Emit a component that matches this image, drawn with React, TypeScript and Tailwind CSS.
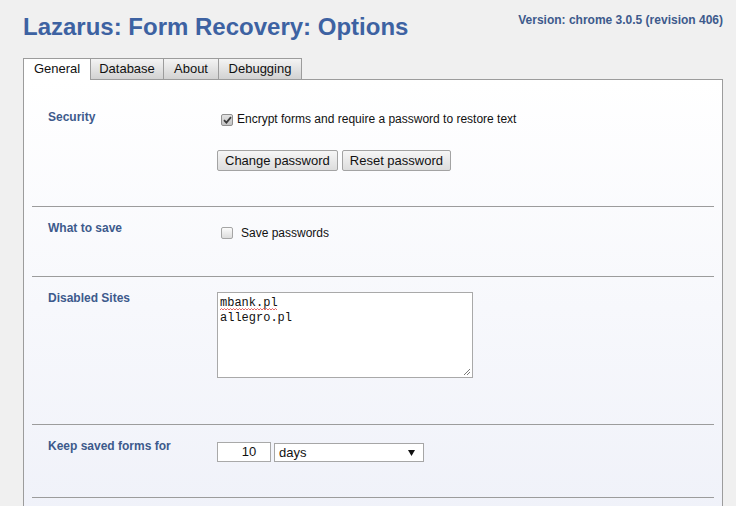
import type { ReactNode } from "react";

const tabs = [
  { name: "General", width: "w-[67px]", active: true },
  { name: "Database", width: "w-[73px]", active: false },
  { name: "About", width: "w-[55px]", active: false },
  { name: "Debugging", width: "w-[84px] border-r", active: false },
];

function Checkbox({ checked }: { checked?: boolean }) {
  return (
    <span
      className={
        checked
          ? "flex h-[12px] w-[12px] shrink-0 items-center justify-center rounded-[2px] border border-[#8f8f8f] bg-gradient-to-b from-[#e2e2e2] to-[#c4c4c4]"
          : "flex h-[12px] w-[12px] shrink-0 items-center justify-center rounded-[2px] border border-[#a5a5a5] bg-gradient-to-b from-[#fbfbfb] to-[#dcdcdc]"
      }
    >
      {checked && (
        <svg width="9" height="8" viewBox="0 0 9 8">
          <path d="M1 4.2 L3.4 6.6 L8 1.2" fill="none" stroke="#3a3a3a" strokeWidth="1.8" />
        </svg>
      )}
    </span>
  );
}

function Button({ children }: { children: ReactNode }) {
  return (
    <button className="h-[21px] rounded-[2px] border border-[#a3a3a3] bg-gradient-to-b from-[#f6f6f6] to-[#dddddd] px-[7px] text-[13px] leading-[19px] text-[#111]">
      {children}
    </button>
  );
}

function Section({ label, children }: { label: string; children: ReactNode }) {
  return (
    <div className="mx-2 flex border-b border-[#9c9c9c] pl-4 pt-[13px] pb-[35px]">
      <div className="w-[169px] shrink-0 text-[12px] font-bold leading-[16px] text-[#3d5a8c]">{label}</div>
      <div className="flex flex-col">{children}</div>
    </div>
  );
}

export default function App() {
  return (
    <div className="h-screen overflow-hidden bg-[#f0f0f0] pl-[23px] pr-[13px] font-['Liberation_Sans',Arial,sans-serif] text-[13px] text-[#111]">
      <div className="flex items-start justify-between pt-[13px]">
        <h1 className="text-[24px] font-bold leading-[28px] text-[#3d62a2]">Lazarus: Form Recovery: Options</h1>
        <div className="text-[12px] font-bold leading-[14px] text-[#3d5a8c]">Version: chrome 3.0.5 (revision 406)</div>
      </div>

      <div className="mt-[17px] flex">
        {tabs.map((tab) => (
          <div
            key={tab.name}
            className={
              tab.active
                ? `${tab.width} relative z-10 -mb-px h-[22px] border-l border-t border-[#9c9c9c] bg-white text-center leading-[20px]`
                : `${tab.width} h-[21px] border-l border-t border-[#9c9c9c] bg-gradient-to-b from-[#f4f4f4] to-[#d2d2d2] text-center leading-[20px]`
            }
          >
            {tab.name}
          </div>
        ))}
      </div>

      <div className="h-[460px] border border-[#9c9c9c] bg-gradient-to-b from-[#ffffff] to-[#eff1f9] pt-[16px]">
        <Section label="Security">
          <label className="mt-[2px] flex h-[16px] items-center">
            <span className="ml-[4px] mt-[1px]">
              <Checkbox checked />
            </span>
            <span className="ml-[4px] text-[12px] leading-[16px]">Encrypt forms and require a password to restore text</span>
          </label>
          <div className="mt-[23px] flex gap-[4px]">
            <Button>Change password</Button>
            <Button>Reset password</Button>
          </div>
        </Section>

        <Section label="What to save">
          <label className="mt-[5px] flex h-[16px] items-center">
            <span className="ml-[4px]">
              <Checkbox />
            </span>
            <span className="ml-[8px] text-[12px] leading-[16px]">Save passwords</span>
          </label>
        </Section>

        <Section label="Disabled Sites">
          <div className="relative mt-[2px] mb-[11px] h-[86px] w-[256px] border border-[#a9a9a9] bg-white px-[2px] pt-[3px] font-['Liberation_Mono',monospace] text-[12px] leading-[15px] text-[#111]">
            <div>
              <span className="relative">
                mbank.pl
                <svg className="absolute left-0 bottom-[-1px]" width="58" height="3" viewBox="0 0 58 3">
                  <path
                    d="M0 2 L1.5 0.5 L3 2 L4.5 0.5 L6 2 L7.5 0.5 L9 2 L10.5 0.5 L12 2 L13.5 0.5 L15 2 L16.5 0.5 L18 2 L19.5 0.5 L21 2 L22.5 0.5 L24 2 L25.5 0.5 L27 2 L28.5 0.5 L30 2 L31.5 0.5 L33 2 L34.5 0.5 L36 2 L37.5 0.5 L39 2 L40.5 0.5 L42 2 L43.5 0.5 L45 2 L46.5 0.5 L48 2 L49.5 0.5 L51 2 L52.5 0.5 L54 2 L55.5 0.5 L57 2"
                    fill="none"
                    stroke="#e04040"
                    strokeWidth="0.8"
                  />
                </svg>
              </span>
            </div>
            <div>allegro.pl</div>
            <svg className="absolute right-[1px] bottom-[1px]" width="8" height="8" viewBox="0 0 8 8">
              <path d="M7 1 L1 7 M7 4 L4 7" stroke="#7a7a7a" strokeWidth="1" />
            </svg>
          </div>
        </Section>

        <Section label="Keep saved forms for">
          <div className="mt-[4px] flex items-start gap-[3px]">
            <div className="h-[20px] w-[54px] border border-[#a9a9a9] bg-white pl-[10px] text-center leading-[18px]">10</div>
            <div className="mt-[1px] flex h-[19px] w-[150px] items-center justify-between border border-[#a6a6a6] bg-white pl-[4px] pr-[8px] leading-[17px]">
              <span>days</span>
              <svg width="7" height="6" viewBox="0 0 7 6">
                <path d="M0 0 H7 L3.5 6 Z" fill="#111" />
              </svg>
            </div>
          </div>
        </Section>
      </div>
    </div>
  );
}
